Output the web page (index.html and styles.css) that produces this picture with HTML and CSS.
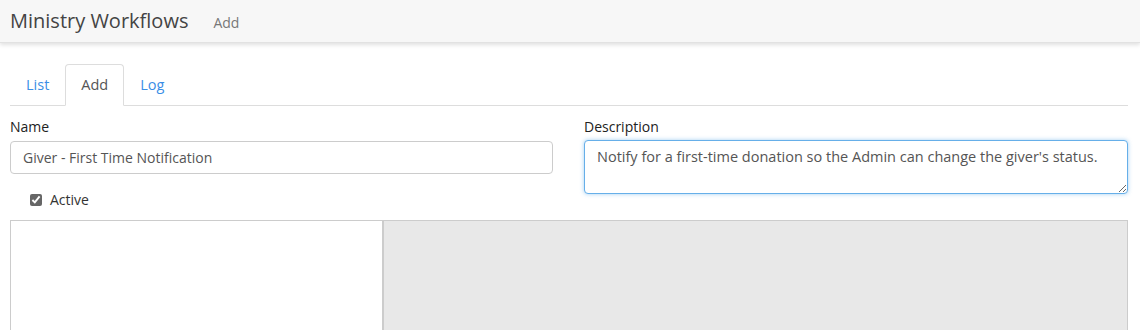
FILE: index.html
```html
<!DOCTYPE html>
<html lang="en">
    <head>
        <meta charset="UTF-8">
        <title>Ministry Workflows</title>
        <link rel="stylesheet" href="styles.css">
    </head>
<body>

<div class="page-header">
    <h1>Ministry Workflows</h1>
    <span class="subtitle">Add</span>
</div>

<div class="content">
    <ul class="tabs">
        <li><a href="#">List</a></li>
        <li class="active"><a href="#">Add</a></li>
        <li><a href="#">Log</a></li>
    </ul>

    <div class="form-row">
        <div class="form-col">
            <label for="wfName">Name</label>
            <input type="text" id="wfName" class="form-control" value="Giver - First Time Notification">
            <div class="checkbox">
                <input type="checkbox" id="wfActive" checked>
                <label for="wfActive">Active</label>
            </div>
        </div>
        <div class="form-col">
            <label for="wfDesc">Description</label>
            <textarea id="wfDesc" class="form-control focused">Notify for a first-time donation so the Admin can change the giver's status.</textarea>
        </div>
    </div>

    <div class="designer">
        <div class="toolbox"></div>
        <div class="canvas"></div>
    </div>
</div>

</body>
</html>
```

FILE: styles.css
```css
body {
    margin: 0;
    font-family: "Open Sans", Arial, sans-serif;
    font-size: 14px;
    color: #333;
    background: #fff;
}
.page-header {
    display: flex;
    align-items: baseline;
    height: 43px;
    padding: 0 10px;
    background-color: #f7f7f7;
    box-shadow: 0 2px 4px rgba(0, 0, 0, 0.12);
    border-bottom: 1px solid #e2e2e2;
    box-sizing: border-box;
}
.page-header h1 {
    margin: 0;
    font-size: 20px;
    font-weight: normal;
    line-height: 42px;
    color: #444;
}
.subtitle {
    margin-left: 25px;
    font-size: 14px;
    color: #777;
}
.content {
    padding: 21px 12px 0 10px;
}
.tabs {
    display: flex;
    list-style: none;
    margin: 0;
    padding: 0;
    border-bottom: 1px solid #ddd;
}
.tabs li {
    margin-bottom: -1px;
}
.tabs a {
    display: block;
    padding: 10px 15px;
    font-size: 14.5px;
    line-height: 20px;
    color: #3a8ee6;
    text-decoration: none;
    border: 1px solid transparent;
    border-radius: 4px 4px 0 0;
}
.tabs li.active a {
    color: #555;
    background: #fff;
    border-color: #ddd #ddd transparent #ddd;
}
.form-row {
    display: grid;
    grid-template-columns: 543px 544px;
    column-gap: 31px;
    margin-top: 11px;
}
.form-col > label {
    display: block;
    margin-bottom: 4px;
    font-weight: normal;
    color: #222;
    line-height: 20px;
}
.form-control {
    display: block;
    width: 100%;
    box-sizing: border-box;
    padding: 6px 12px;
    font-family: "Open Sans", Arial, sans-serif;
    font-size: 14px;
    line-height: 20px;
    color: #555;
    border: 1px solid #ccc;
    border-radius: 4px;
    height: 33px;
}
textarea.form-control {
    height: 54px;
    margin-top: -1px;
    font-size: 14.5px;
    resize: vertical;
}
.form-control.focused {
    border-color: #66afe9;
    box-shadow: 0 0 4px rgba(102, 175, 233, 0.6);
    outline: none;
}
.checkbox {
    display: flex;
    align-items: center;
    margin: 16px 0 0 20px;
    line-height: 20px;
}
.checkbox input {
    margin: 0 8px 0 0;
    width: 12px;
    height: 12px;
    accent-color: #666;
}
.checkbox label {
    color: #333;
}
.designer {
    display: flex;
    height: 120px;
    margin-top: 10px;
    border-top: 1px solid #ccc;
    border-left: 1px solid #ccc;
}
.toolbox {
    width: 371px;
    background: #fff;
    border-right: 2px solid #ccc;
}
.canvas {
    flex: 1;
    background: #e8e8e8;
    border-right: 1px solid #ccc;
}
```
